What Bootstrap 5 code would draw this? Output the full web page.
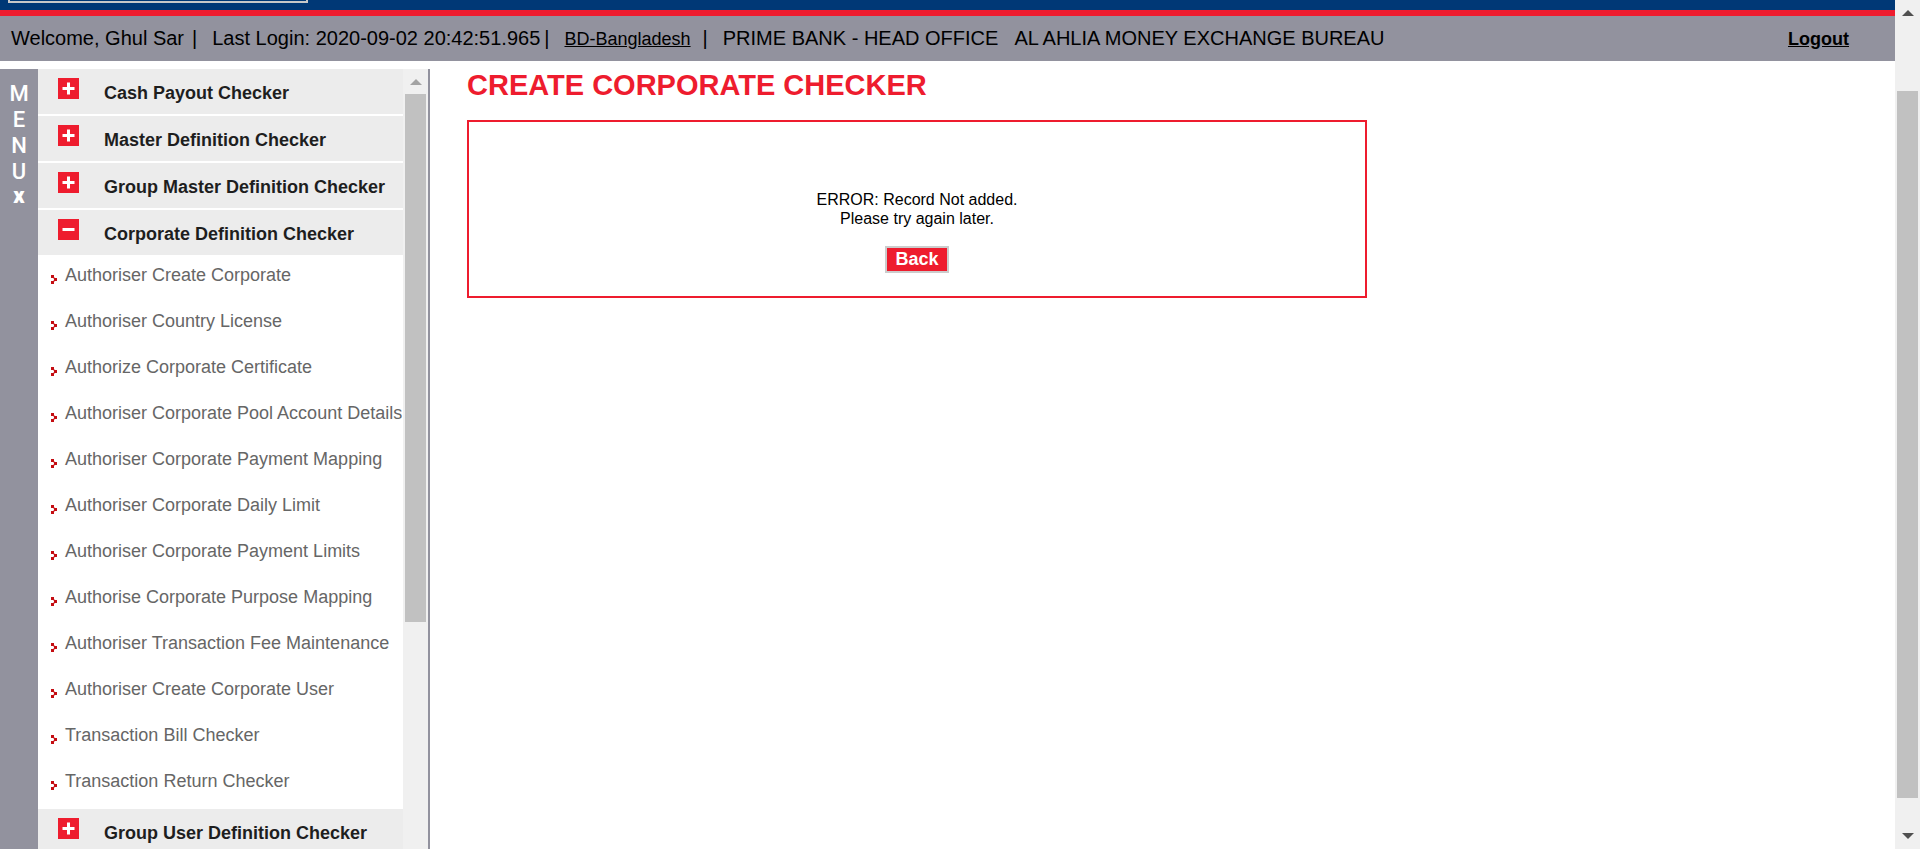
<!DOCTYPE html>
<html lang="en">
<head>
<meta charset="utf-8">
<meta name="viewport" content="width=device-width, initial-scale=1">
<title>Create Corporate Checker</title>
<link href="https://cdn.jsdelivr.net/npm/bootstrap@5.3.0/dist/css/bootstrap.min.css" rel="stylesheet">
<style>
:root { --brand-red: #ee1c2e; --brand-blue: #003876; --brand-gray: #92929e; }
body { font-family: "Liberation Sans", Arial, sans-serif; color: #000; line-height: 20px; }
.brand-strip { height: 16px; background: var(--brand-blue); border-bottom: 6px solid var(--brand-red); padding-left: 8px; }
.brand-box { width: 300px; height: 3px; border: 2px solid #c8c8c8; border-top: 0; }
.user-bar { height: 45px; background: var(--brand-gray); font-size: 20px; padding: 0 46px 0 11px; }
.user-bar a { color: #000; font-size: 18px; }
.bar-sep { margin: 0 15px 0 4px; }
.menu-rail { width: 38px; background: var(--brand-gray); color: #fff; font: 500 22px/26px Roboto, sans-serif; padding-top: 12px; }
.menu-rail button { font: 900 22px/22px Roboto, sans-serif; color: #fff; }
.menu-pane { width: 365px; }
.menu-head { height: 45px; margin-bottom: 2px; padding: 0 0 0 20px; background: #ececec; color: #1e1e1e; font-size: 18px; font-weight: 700; line-height: 42px; text-align: left; }
.menu-head span { padding-top: 3px; }
.menu-head svg { margin: 9px 25px 0 0; }
.menu-links { margin-top: -2px; padding-bottom: 2px; }
.menu-links a { height: 46px; padding: 9px 0 0 13px; font-size: 18px; line-height: 22px; color: #666; white-space: nowrap; }
.menu-links svg { margin: 11px 8px 0 0; }
.bar-track { width: 25px; background: #f0f0f0; }
.bar-thumb { width: 21px; background: #c1c1c1; }
.side-edge { width: 2px; background: var(--brand-gray); }
.side-bar .bar-thumb { height: 528px; margin-top: 9px; }
.page-title { color: var(--brand-red); font-size: 29px; font-weight: 700; line-height: 32px; margin-bottom: 19px; }
.main-area { padding-left: 37px; }
.result-box { max-width: 900px; height: 178px; border: 2px solid var(--brand-red); padding-top: 68px; font-size: 16px; line-height: 19px; }
.back-btn { width: 64px; height: 27px; margin-top: 18px; padding: 0 0 2px; background: var(--brand-red); border: 2px solid #ccc; color: #fff; font-size: 18px; line-height: 18px; font-weight: 700; }
</style>
</head>
<body>
<div class="d-flex vh-100 overflow-hidden">
  <div class="d-flex flex-column flex-grow-1">
    <header class="flex-shrink-0">
      <div class="brand-strip"><div class="brand-box"></div></div>
      <div class="user-bar d-flex align-items-center text-nowrap">
        <div class="d-flex align-items-baseline">
          <span class="me-1">Welcome, Ghul Sar</span><span class="bar-sep">|</span>
          <span>Last Login: 2020-09-02 20:42:51.965</span><span class="bar-sep">|</span>
          <a href="#" class="me-2">BD-Bangladesh</a><span class="bar-sep">|</span>
          <span>PRIME BANK - HEAD OFFICE</span>
          <span class="ms-3">AL AHLIA MONEY EXCHANGE BUREAU</span>
        </div>
        <a href="#" class="ms-auto fw-bold">Logout</a>
      </div>
    </header>
    <div class="d-flex flex-grow-1 mt-2 overflow-hidden">
      <div class="menu-rail d-flex flex-column align-items-center flex-shrink-0">
        <span>M</span><span>E</span><span>N</span><span>U</span>
        <button type="button" class="border-0 bg-transparent p-0" aria-label="Close menu">x</button>
      </div>
      <nav class="menu-pane flex-shrink-0 overflow-hidden" aria-label="Main menu">
        <button type="button" class="menu-head d-flex w-100 border-0"><svg width="21" height="21"><path fill="#ee1c2e" d="M0 0h21v21H0z"/><path stroke="#fff" stroke-width="3" d="M4.500 10.500h12M10.500 4.500v12"/></svg><span>Cash Payout Checker</span></button>
        <button type="button" class="menu-head d-flex w-100 border-0"><svg width="21" height="21"><path fill="#ee1c2e" d="M0 0h21v21H0z"/><path stroke="#fff" stroke-width="3" d="M4.500 10.500h12M10.500 4.500v12"/></svg><span>Master Definition Checker</span></button>
        <button type="button" class="menu-head d-flex w-100 border-0"><svg width="21" height="21"><path fill="#ee1c2e" d="M0 0h21v21H0z"/><path stroke="#fff" stroke-width="3" d="M4.500 10.500h12M10.500 4.500v12"/></svg><span>Group Master Definition Checker</span></button>
        <button type="button" class="menu-head d-flex w-100 border-0" aria-expanded="true"><svg width="21" height="21"><path fill="#ee1c2e" d="M0 0h21v21H0z"/><path stroke="#fff" stroke-width="3" d="M4.500 10.500h12"/></svg><span>Corporate Definition Checker</span></button>
        <svg class="d-none"><symbol id="dots" viewBox="0 0 6 9"><path fill="#c40d12" d="M0 0h3v3H0zM3 3h3v3H3zM0 6h3v3H0z"/><path fill="#eda9ab" d="M3 2h1v1H3zM3 6h1v1H3zM2 3h1v1H2zM2 5h1v1H2z"/></symbol></svg>
        <div class="menu-links">
          <a href="#" class="d-flex text-decoration-none"><svg width="6" height="9"><use href="#dots"/></svg>Authoriser Create Corporate</a>
          <a href="#" class="d-flex text-decoration-none"><svg width="6" height="9"><use href="#dots"/></svg>Authoriser Country License</a>
          <a href="#" class="d-flex text-decoration-none"><svg width="6" height="9"><use href="#dots"/></svg>Authorize Corporate Certificate</a>
          <a href="#" class="d-flex text-decoration-none"><svg width="6" height="9"><use href="#dots"/></svg>Authoriser Corporate Pool Account Details</a>
          <a href="#" class="d-flex text-decoration-none"><svg width="6" height="9"><use href="#dots"/></svg>Authoriser Corporate Payment Mapping</a>
          <a href="#" class="d-flex text-decoration-none"><svg width="6" height="9"><use href="#dots"/></svg>Authoriser Corporate Daily Limit</a>
          <a href="#" class="d-flex text-decoration-none"><svg width="6" height="9"><use href="#dots"/></svg>Authoriser Corporate Payment Limits</a>
          <a href="#" class="d-flex text-decoration-none"><svg width="6" height="9"><use href="#dots"/></svg>Authorise Corporate Purpose Mapping</a>
          <a href="#" class="d-flex text-decoration-none"><svg width="6" height="9"><use href="#dots"/></svg>Authoriser Transaction Fee Maintenance</a>
          <a href="#" class="d-flex text-decoration-none"><svg width="6" height="9"><use href="#dots"/></svg>Authoriser Create Corporate User</a>
          <a href="#" class="d-flex text-decoration-none"><svg width="6" height="9"><use href="#dots"/></svg>Transaction Bill Checker</a>
          <a href="#" class="d-flex text-decoration-none"><svg width="6" height="9"><use href="#dots"/></svg>Transaction Return Checker</a>
        </div>
        <button type="button" class="menu-head d-flex w-100 border-0"><svg width="21" height="21"><path fill="#ee1c2e" d="M0 0h21v21H0z"/><path stroke="#fff" stroke-width="3" d="M4.500 10.500h12M10.500 4.500v12"/></svg><span>Group User Definition Checker</span></button>
      </nav>
      <div class="side-bar bar-track d-flex flex-column align-items-center flex-shrink-0" aria-hidden="true">
        <svg width="12" height="6" style="margin-top:10px"><path fill="#a3a3a3" d="M6 0l6 6H0z"/></svg>
        <div class="bar-thumb"></div>
      </div>
      <div class="side-edge flex-shrink-0"></div>
      <main class="main-area flex-grow-1">
        <h1 class="page-title">CREATE CORPORATE CHECKER</h1>
        <section class="result-box text-center">
          <div>ERROR: Record Not added.<br>Please try again later.</div>
          <button type="button" class="back-btn d-block mx-auto">Back</button>
        </section>
      </main>
    </div>
  </div>
  <div class="bar-track d-flex flex-column align-items-center flex-shrink-0" aria-hidden="true">
    <svg class="flex-shrink-0" width="12" height="6" style="margin-top:10px"><path fill="#505050" d="M6 0l6 6H0z"/></svg>
    <div class="bar-thumb flex-grow-1" style="margin:75px 0 35px"></div>
    <svg class="flex-shrink-0" width="12" height="6" style="margin-bottom:10px"><path fill="#505050" d="M0 0h12L6 6z"/></svg>
  </div>
</div>
<script src="https://cdn.jsdelivr.net/npm/bootstrap@5.3.0/dist/js/bootstrap.bundle.min.js"></script>
</body>
</html>
